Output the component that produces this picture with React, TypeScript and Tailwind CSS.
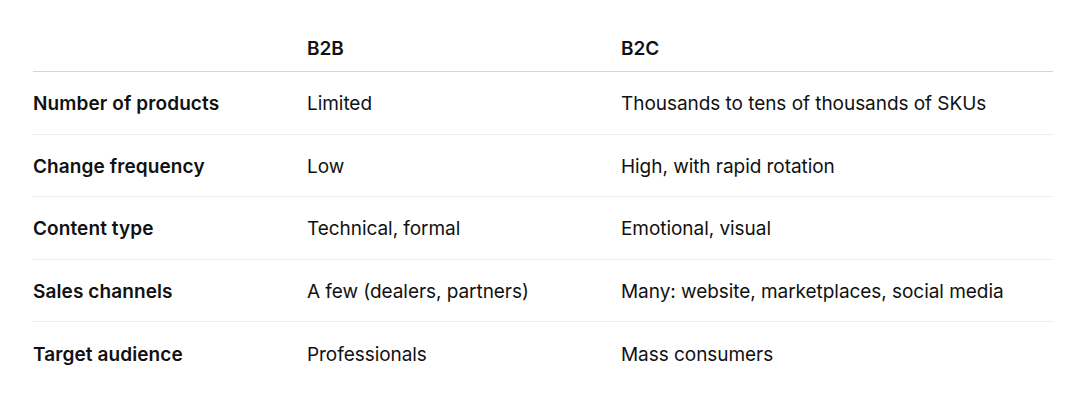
import React from "react";

const rows: [string, string, string][] = [
  ["Number of products", "Limited", "Thousands to tens of thousands of SKUs"],
  ["Change frequency", "Low", "High, with rapid rotation"],
  ["Content type", "Technical, formal", "Emotional, visual"],
  ["Sales channels", "A few (dealers, partners)", "Many: website, marketplaces, social media"],
  ["Target audience", "Professionals", "Mass consumers"],
];

export default function App() {
  return (
    <div
      className="w-[1082px] h-[409px] bg-white pl-[33px] pr-[29px] pt-6 text-[19px] text-[#111111]"
      style={{ fontFamily: "Inter, 'Noto Sans', sans-serif" }}
    >
      <div className="grid grid-cols-[274px_314px_1fr] h-12 items-center pt-[4px] border-b border-[#d6d6d6] font-semibold">
        <div />
        <div>B2B</div>
        <div>B2C</div>
      </div>
      {rows.map((r, i) => (
        <div
          key={r[0]}
          className={
            "grid grid-cols-[274px_314px_1fr] h-[62.5px] items-center pt-[3px] " +
            (i < rows.length - 1 ? "border-b border-[#ececec]" : "")
          }
        >
          <div className="font-semibold tracking-[0.1px]">{r[0]}</div>
          <div className="tracking-[-0.05px]">{r[1]}</div>
          <div className="tracking-[-0.05px]">{r[2]}</div>
        </div>
      ))}
    </div>
  );
}
